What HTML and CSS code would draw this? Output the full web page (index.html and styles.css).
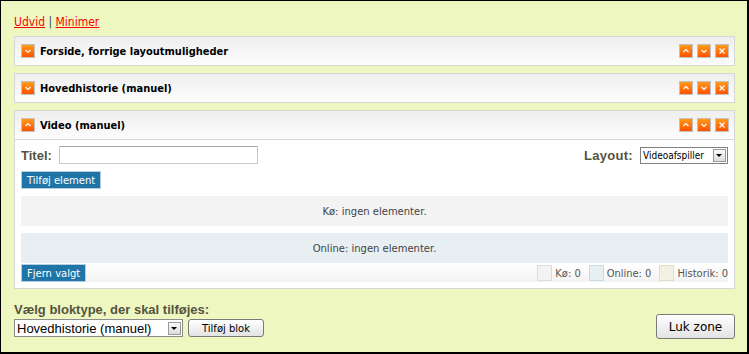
FILE: index.html
```html
<!DOCTYPE html>
<html lang="da">
<head>
    <meta charset="UTF-8">
    <title>Zone</title>
    <link rel="stylesheet" href="styles.css">
</head>
<body>
    <div class="zone">
        <div class="zone-links">
            <a href="#">Udvid</a> | <a href="#">Minimer</a>
        </div>

        <div class="block">
            <div class="block-head">
                <span class="btn-icon"><svg viewBox="0 0 12 12"><path d="M3.5 5 L6 7.5 L8.5 5"/></svg></span>
                <span class="block-title">Forside, forrige layoutmuligheder</span>
                <div class="block-tools">
                    <span class="btn-icon"><svg viewBox="0 0 12 12"><path d="M3.5 7 L6 4.5 L8.5 7"/></svg></span>
                    <span class="btn-icon"><svg viewBox="0 0 12 12"><path d="M3.5 5 L6 7.5 L8.5 5"/></svg></span>
                    <span class="btn-icon"><svg viewBox="0 0 12 12"><path d="M3.5 3.5 L8.5 8.5 M8.5 3.5 L3.5 8.5"/></svg></span>
                </div>
            </div>
        </div>

        <div class="block">
            <div class="block-head">
                <span class="btn-icon"><svg viewBox="0 0 12 12"><path d="M3.5 5 L6 7.5 L8.5 5"/></svg></span>
                <span class="block-title">Hovedhistorie (manuel)</span>
                <div class="block-tools">
                    <span class="btn-icon"><svg viewBox="0 0 12 12"><path d="M3.5 7 L6 4.5 L8.5 7"/></svg></span>
                    <span class="btn-icon"><svg viewBox="0 0 12 12"><path d="M3.5 5 L6 7.5 L8.5 5"/></svg></span>
                    <span class="btn-icon"><svg viewBox="0 0 12 12"><path d="M3.5 3.5 L8.5 8.5 M8.5 3.5 L3.5 8.5"/></svg></span>
                </div>
            </div>
        </div>

        <div class="block">
            <div class="block-head">
                <span class="btn-icon"><svg viewBox="0 0 12 12"><path d="M3.5 7 L6 4.5 L8.5 7"/></svg></span>
                <span class="block-title">Video (manuel)</span>
                <div class="block-tools">
                    <span class="btn-icon"><svg viewBox="0 0 12 12"><path d="M3.5 7 L6 4.5 L8.5 7"/></svg></span>
                    <span class="btn-icon"><svg viewBox="0 0 12 12"><path d="M3.5 5 L6 7.5 L8.5 5"/></svg></span>
                    <span class="btn-icon"><svg viewBox="0 0 12 12"><path d="M3.5 3.5 L8.5 8.5 M8.5 3.5 L3.5 8.5"/></svg></span>
                </div>
            </div>
            <div class="block-body">
                <div class="row-top">
                    <label class="lbl" for="titel">Titel:</label>
                    <input type="text" id="titel" class="txt">
                    <span class="spacer"></span>
                    <label class="lbl lbl-layout" for="layout">Layout:</label>
                    <div class="sel sel-small">
                        <select id="layout">
                            <option>Videoafspiller</option>
                        </select>
                        <span class="sel-arrow"></span>
                    </div>
                </div>
                <div><button class="btn-blue">Tilføj element</button></div>
                <div class="queue queue-ko">Kø: ingen elementer.</div>
                <div class="queue queue-online">Online: ingen elementer.</div>
                <div class="row-foot">
                    <button class="btn-blue">Fjern valgt</button>
                    <div class="legend">
                        <span class="swatch sw-ko"></span>Kø: 0
                        <span class="swatch sw-online"></span>Online: 0
                        <span class="swatch sw-hist"></span>Historik: 0
                    </div>
                </div>
            </div>
        </div>

        <div class="zone-foot">
            <div class="add-block">
                <div class="lbl">Vælg bloktype, der skal tilføjes:</div>
                <div class="add-row">
                    <div class="sel sel-big">
                        <select>
                            <option>Hovedhistorie (manuel)</option>
                        </select>
                        <span class="sel-arrow"></span>
                    </div>
                    <button class="btn-gray">Tilføj blok</button>
                </div>
            </div>
            <button class="btn-gray btn-close">Luk zone</button>
        </div>
    </div>
</body>
</html>
```

FILE: styles.css
```css
body {
    margin: 0;
    font-family: "DejaVu Sans", Verdana, sans-serif;
    font-size: 10px;
}
.zone {
    width: 749px;
    height: 354px;
    box-sizing: border-box;
    border-style: solid;
    border-color: #000;
    border-width: 1px 2px 2px 1px;
    background: #eff7c1;
    padding: 13px 12px 0 13px;
}
.zone-links {
    font-family: "DejaVu Sans Condensed", "DejaVu Sans", sans-serif;
    font-size: 12px;
    color: #444;
    height: 22px;
    line-height: 17px;
}
.zone-links a {
    color: #f00;
}
.block {
    background: #fff;
    border: 1px solid #d6d6d6;
    margin-bottom: 7px;
}
.block-head {
    height: 28px;
    display: flex;
    align-items: center;
    padding: 0 5px 0 6px;
    background: linear-gradient(#eeeeee, #fdfdfd);
}
.block-title {
    font-family: "DejaVu Sans Condensed", "DejaVu Sans", sans-serif;
    font-weight: bold;
    font-size: 11px;
    margin-left: 5px;
    color: #000;
}
.block-tools {
    margin-left: auto;
    display: flex;
    gap: 4px;
}
.btn-icon {
    width: 12px;
    height: 12px;
    border: 1px solid #c2c2c2;
    background: linear-gradient(#ff9a1a, #ff5200);
    display: block;
}
.btn-icon svg {
    width: 12px;
    height: 12px;
    display: block;
    fill: none;
    stroke: #fff;
    stroke-width: 1.2;
}
.block-body {
    border-top: 1px solid #d6d6d6;
    padding: 6px 6px 6px 6px;
    display: flex;
    flex-direction: column;
    gap: 7px;
}
.row-top {
    display: flex;
    align-items: center;
    height: 18px;
}
.lbl {
    font-family: "Liberation Sans", Arial, sans-serif;
    font-weight: bold;
    font-size: 13px;
    color: #535341;
}
.txt {
    margin: 0 0 0 7px;
    width: 199px;
    height: 18px;
    box-sizing: border-box;
    border: 1px solid #c9c9c9;
    border-top-color: #a9a9a9;
    padding: 0 3px;
}
.spacer {
    flex: 1;
}
.lbl-layout {
    letter-spacing: 0.3px;
    margin-right: 7px;
}
.sel {
    display: flex;
    align-items: center;
    background: #fff;
    border: 1px solid #7f9db9;
    box-sizing: border-box;
}
.sel select {
    appearance: none;
    border: none;
    background: transparent;
    padding: 0 0 0 2px;
    margin: 0;
    flex: 1;
    color: #000;
    outline: none;
}
.sel-small {
    width: 88px;
    height: 17px;
    border-color: #808080;
}
.sel-small select {
    font-family: "DejaVu Sans Condensed", "DejaVu Sans", sans-serif;
    font-size: 10px;
}
.sel-big {
    width: 169px;
    height: 18px;
    border-color: #8c8c8c;
}
.sel-big select {
    font-family: "Liberation Sans", Arial, sans-serif;
    font-size: 13px;
}
.sel-arrow {
    width: 13px;
    height: 13px;
    margin-right: 1px;
    box-sizing: border-box;
    border: 1px solid #9a9a9a;
    background: linear-gradient(#fafafa, #dcdcdc);
    position: relative;
}
.sel-arrow::after {
    content: "";
    position: absolute;
    left: 2px;
    top: 4px;
    border-style: solid;
    border-width: 3px 3.5px 0 3.5px;
    border-color: #000 transparent transparent transparent;
}
.btn-blue {
    font-family: "DejaVu Sans", Verdana, sans-serif;
    font-size: 10px;
    color: #fff;
    background: #1f75a8;
    border: 1px solid #b6cfdd;
    height: 18px;
    padding: 0 5px;
    margin: 0;
    cursor: pointer;
}
.queue {
    height: 30px;
    display: flex;
    align-items: center;
    justify-content: center;
    color: #444;
}
.queue-ko {
    background: #f3f3f3;
}
.queue-online {
    background: #e8eff2;
}
.row-foot {
    display: flex;
    align-items: center;
    margin-top: -6px;
    background: linear-gradient(#fff, #f3f3f3);
}
.legend {
    margin-left: auto;
    display: flex;
    align-items: center;
    color: #555;
    font-family: "DejaVu Sans Condensed", "DejaVu Sans", sans-serif;
    font-size: 11px;
}
.swatch {
    width: 13px;
    height: 14px;
    margin: 0 3px 0 8px;
}
.sw-ko {
    background: #f3f3f3;
    border: 1px solid #dcdcdc;
}
.sw-online {
    background: #e8eff2;
    border: 1px solid #c9dbe4;
}
.sw-hist {
    background: #f3f0e4;
    border: 1px solid #e2ddca;
}
.zone-foot {
    display: flex;
    align-items: flex-end;
    margin-top: 13px;
}
.add-row {
    display: flex;
    align-items: center;
    gap: 5px;
    margin-top: 2px;
}
.btn-gray {
    font-family: "DejaVu Sans", Verdana, sans-serif;
    font-size: 10px;
    color: #000;
    height: 18px;
    padding: 0 13px;
    border: 1px solid #7a7a7a;
    border-radius: 3px;
    background: linear-gradient(#ffffff, #e3e3e3);
    cursor: pointer;
}
.btn-close {
    margin-left: auto;
    margin-bottom: -2px;
    height: 25px;
    width: 79px;
    padding: 0;
    font-size: 12px;
}
```
